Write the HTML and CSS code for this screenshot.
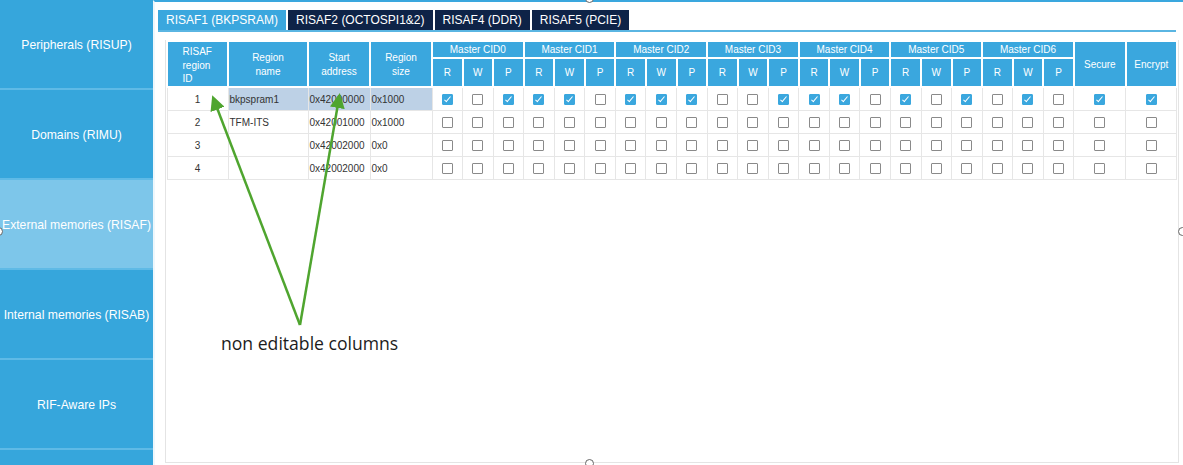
FILE: index.html
```html
<!DOCTYPE html>
<html>
<head>
    <title>RIF configuration - RISAF</title>
    <link rel="stylesheet" href="styles.css">
</head>
<body>
<div class="app">
    <nav class="side">
        <div class="side-item">Peripherals (RISUP)</div>
        <div class="side-item">Domains (RIMU)</div>
        <div class="side-item active">External memories (RISAF)</div>
        <div class="side-item">Internal memories (RISAB)</div>
        <div class="side-item">RIF-Aware IPs</div>
        <div class="side-item"></div>
    </nav>

    <main class="main">
        <div class="tabs">
            <div class="tab active">RISAF1 (BKPSRAM)</div>
            <div class="tab">RISAF2 (OCTOSPI1&amp;2)</div>
            <div class="tab">RISAF4 (DDR)</div>
            <div class="tab">RISAF5 (PCIE)</div>
        </div>

        <div class="panel">
            <div class="grid-box">
                <table class="grid">
                    <colgroup>
                        <col class="c-id"><col class="c-name"><col class="c-addr"><col class="c-size">
                        <col class="c-rwp"><col class="c-rwp"><col class="c-rwp">
                        <col class="c-rwp"><col class="c-rwp"><col class="c-rwp">
                        <col class="c-rwp"><col class="c-rwp"><col class="c-rwp">
                        <col class="c-rwp"><col class="c-rwp"><col class="c-rwp">
                        <col class="c-rwp"><col class="c-rwp"><col class="c-rwp">
                        <col class="c-rwp"><col class="c-rwp"><col class="c-rwp">
                        <col class="c-rwp"><col class="c-rwp"><col class="c-rwp">
                        <col class="c-sec"><col class="c-enc">
                    </colgroup>
                    <thead>
                    <tr class="h-group">
                        <th rowspan="2"><span class="id-head">RISAF region ID</span></th>
                        <th rowspan="2">Region<br>name</th>
                        <th rowspan="2">Start<br>address</th>
                        <th rowspan="2">Region<br>size</th>
                        <th colspan="3">Master CID0</th>
                        <th colspan="3">Master CID1</th>
                        <th colspan="3">Master CID2</th>
                        <th colspan="3">Master CID3</th>
                        <th colspan="3">Master CID4</th>
                        <th colspan="3">Master CID5</th>
                        <th colspan="3">Master CID6</th>
                        <th rowspan="2">Secure</th>
                        <th rowspan="2">Encrypt</th>
                    </tr>
                    <tr class="h-sub">
                        <th>R</th><th>W</th><th>P</th>
                        <th>R</th><th>W</th><th>P</th>
                        <th>R</th><th>W</th><th>P</th>
                        <th>R</th><th>W</th><th>P</th>
                        <th>R</th><th>W</th><th>P</th>
                        <th>R</th><th>W</th><th>P</th>
                        <th>R</th><th>W</th><th>P</th>
                    </tr>
                    </thead>
                    <tbody>
                    <tr>
                        <td class="id">1</td>
                        <td class="txt sel">bkpspram1</td>
                        <td class="txt sel">0x42000000</td>
                        <td class="txt sel">0x1000</td>
                        <td><span class="cb on"></span></td><td><span class="cb"></span></td><td><span class="cb on"></span></td>
                        <td><span class="cb on"></span></td><td><span class="cb on"></span></td><td><span class="cb"></span></td>
                        <td><span class="cb on"></span></td><td><span class="cb on"></span></td><td><span class="cb on"></span></td>
                        <td><span class="cb"></span></td><td><span class="cb"></span></td><td><span class="cb on"></span></td>
                        <td><span class="cb on"></span></td><td><span class="cb on"></span></td><td><span class="cb"></span></td>
                        <td><span class="cb on"></span></td><td><span class="cb"></span></td><td><span class="cb on"></span></td>
                        <td><span class="cb"></span></td><td><span class="cb on"></span></td><td><span class="cb"></span></td>
                        <td><span class="cb on"></span></td>
                        <td><span class="cb on"></span></td>
                    </tr>
                    <tr>
                        <td class="id">2</td>
                        <td class="txt">TFM-ITS</td>
                        <td class="txt">0x42001000</td>
                        <td class="txt">0x1000</td>
                        <td><span class="cb"></span></td><td><span class="cb"></span></td><td><span class="cb"></span></td>
                        <td><span class="cb"></span></td><td><span class="cb"></span></td><td><span class="cb"></span></td>
                        <td><span class="cb"></span></td><td><span class="cb"></span></td><td><span class="cb"></span></td>
                        <td><span class="cb"></span></td><td><span class="cb"></span></td><td><span class="cb"></span></td>
                        <td><span class="cb"></span></td><td><span class="cb"></span></td><td><span class="cb"></span></td>
                        <td><span class="cb"></span></td><td><span class="cb"></span></td><td><span class="cb"></span></td>
                        <td><span class="cb"></span></td><td><span class="cb"></span></td><td><span class="cb"></span></td>
                        <td><span class="cb"></span></td>
                        <td><span class="cb"></span></td>
                    </tr>
                    <tr>
                        <td class="id">3</td>
                        <td class="txt"></td>
                        <td class="txt">0x42002000</td>
                        <td class="txt">0x0</td>
                        <td><span class="cb"></span></td><td><span class="cb"></span></td><td><span class="cb"></span></td>
                        <td><span class="cb"></span></td><td><span class="cb"></span></td><td><span class="cb"></span></td>
                        <td><span class="cb"></span></td><td><span class="cb"></span></td><td><span class="cb"></span></td>
                        <td><span class="cb"></span></td><td><span class="cb"></span></td><td><span class="cb"></span></td>
                        <td><span class="cb"></span></td><td><span class="cb"></span></td><td><span class="cb"></span></td>
                        <td><span class="cb"></span></td><td><span class="cb"></span></td><td><span class="cb"></span></td>
                        <td><span class="cb"></span></td><td><span class="cb"></span></td><td><span class="cb"></span></td>
                        <td><span class="cb"></span></td>
                        <td><span class="cb"></span></td>
                    </tr>
                    <tr>
                        <td class="id">4</td>
                        <td class="txt"></td>
                        <td class="txt">0x42002000</td>
                        <td class="txt">0x0</td>
                        <td><span class="cb"></span></td><td><span class="cb"></span></td><td><span class="cb"></span></td>
                        <td><span class="cb"></span></td><td><span class="cb"></span></td><td><span class="cb"></span></td>
                        <td><span class="cb"></span></td><td><span class="cb"></span></td><td><span class="cb"></span></td>
                        <td><span class="cb"></span></td><td><span class="cb"></span></td><td><span class="cb"></span></td>
                        <td><span class="cb"></span></td><td><span class="cb"></span></td><td><span class="cb"></span></td>
                        <td><span class="cb"></span></td><td><span class="cb"></span></td><td><span class="cb"></span></td>
                        <td><span class="cb"></span></td><td><span class="cb"></span></td><td><span class="cb"></span></td>
                        <td><span class="cb"></span></td>
                        <td><span class="cb"></span></td>
                    </tr>
                    </tbody>
                </table>
            </div>
        </div>
    </main>
</div>

<!-- callout: arrows pointing at the read-only columns -->
<svg class="callout" width="1183" height="465" viewBox="0 0 1183 465">
    <defs>
        <marker id="tip" markerWidth="6" markerHeight="6" refX="4" refY="3" orient="auto" markerUnits="strokeWidth">
            <path d="M0,0 L6,3 L0,6 Z" fill="#4fa52f"/>
        </marker>
    </defs>
    <line x1="300" y1="325" x2="214" y2="100" stroke="#4fa52f" stroke-width="2.5" marker-end="url(#tip)"/>
    <line x1="300" y1="325" x2="339" y2="98" stroke="#4fa52f" stroke-width="2.5" marker-end="url(#tip)"/>
</svg>
<div class="callout-text">non editable columns</div>

<!-- frame handles -->
<span class="handle h-top"></span>
<span class="handle h-bottom"></span>
<span class="handle h-left"></span>
<span class="handle h-right"></span>
</body>
</html>
```

FILE: styles.css
```css
body {
    margin: 0;
    width: 1183px;
    height: 465px;
    overflow: hidden;
    background: #fff;
    font-family: "Liberation Sans", Arial, sans-serif;
    position: relative;
}

.app {
    display: grid;
    grid-template-columns: 153px 1fr;
    height: 465px;
}

/* left navigation */
.side {
    background: #36a6dc;
    overflow: hidden;
}

.side-item {
    height: 86px;
    padding-top: 2px;
    border-bottom: 2px solid #5fbae6;
    display: flex;
    align-items: center;
    justify-content: center;
    color: #fff;
    font-size: 12.2px;
    white-space: nowrap;
}

.side-item.active {
    background: #7dc6ea;
}

/* main area */
.main {
    border-top: 2px solid #3aa7de;
    border-left: 2px solid #eef7fc;
    padding: 8px 7px 0 3px;
    display: flex;
    flex-direction: column;
    min-width: 0;
}

.tabs {
    display: flex;
    gap: 2px;
}

.tab {
    height: 20px;
    line-height: 21px;
    padding: 0 8px;
    font-size: 12px;
    color: #fff;
    background: #0e2347;
}

.tab.active {
    background: #3aa7de;
}

.panel {
    flex: 1;
    border-top: 2px solid #5ab5e2;
    padding: 8px 0 0 7px;
    display: flex;
}

.grid-box {
    flex: 1;
    border: 1px solid #e4e4e4;
    border-top: none;
    margin-bottom: 2px;
}

/* table */
.grid {
    width: 100%;
    table-layout: fixed;
    border-collapse: collapse;
    font-size: 10px;
}

.c-id { width: 61px; }
.c-name { width: 80px; }
.c-addr { width: 62px; }
.c-size { width: 62px; }
.c-rwp { width: 30.57px; }
.c-sec { width: 52px; }
.c-enc { width: 51px; }

.grid th {
    background: #3aa7de;
    color: #fff;
    font-weight: normal;
    border: 2px solid #fff;
    line-height: 13.5px;
    padding: 0;
}

.h-group th {
    height: 14px;
    padding-top: 1px;
}

.h-sub th {
    height: 27px;
}

.id-head {
    display: inline-block;
    width: 30px;
    text-align: left;
    padding-top: 2px;
}

.grid td {
    height: 22px;
    border: 1px solid #e6e6e6;
    text-align: center;
    color: #333;
    padding: 0;
}

.grid td.txt {
    text-align: left;
    padding-left: 1px;
}

.grid td.sel {
    background: #bdd1e6;
}

/* checkboxes */
.cb {
    display: inline-block;
    width: 9px;
    height: 9px;
    border: 1px solid #8a8a8a;
    border-radius: 1px;
    background: #fff;
    vertical-align: middle;
    position: relative;
}

.cb.on {
    background: #3aa7de;
    border-color: #3aa7de;
}

.cb.on::after {
    content: "";
    position: absolute;
    left: 3px;
    top: 0;
    width: 2px;
    height: 6px;
    border: solid #fff;
    border-width: 0 1.5px 1.5px 0;
    transform: rotate(40deg);
}

/* callout */
.callout {
    position: absolute;
    top: 0;
    left: 0;
    pointer-events: none;
}

.callout-text {
    position: absolute;
    left: 221px;
    top: 332px;
    font-family: "Open Sans", sans-serif;
    font-size: 17.6px;
    line-height: 22px;
    color: #1c1c1c;
}

.handle {
    position: absolute;
    width: 7px;
    height: 7px;
    border: 1.5px solid #666;
    border-radius: 50%;
    background: #fff;
}

.h-top { left: 585px; top: -6px; }
.h-bottom { left: 585px; top: 459px; }
.h-left { left: -6px; top: 227px; }
.h-right { left: 1178px; top: 227px; }
```
